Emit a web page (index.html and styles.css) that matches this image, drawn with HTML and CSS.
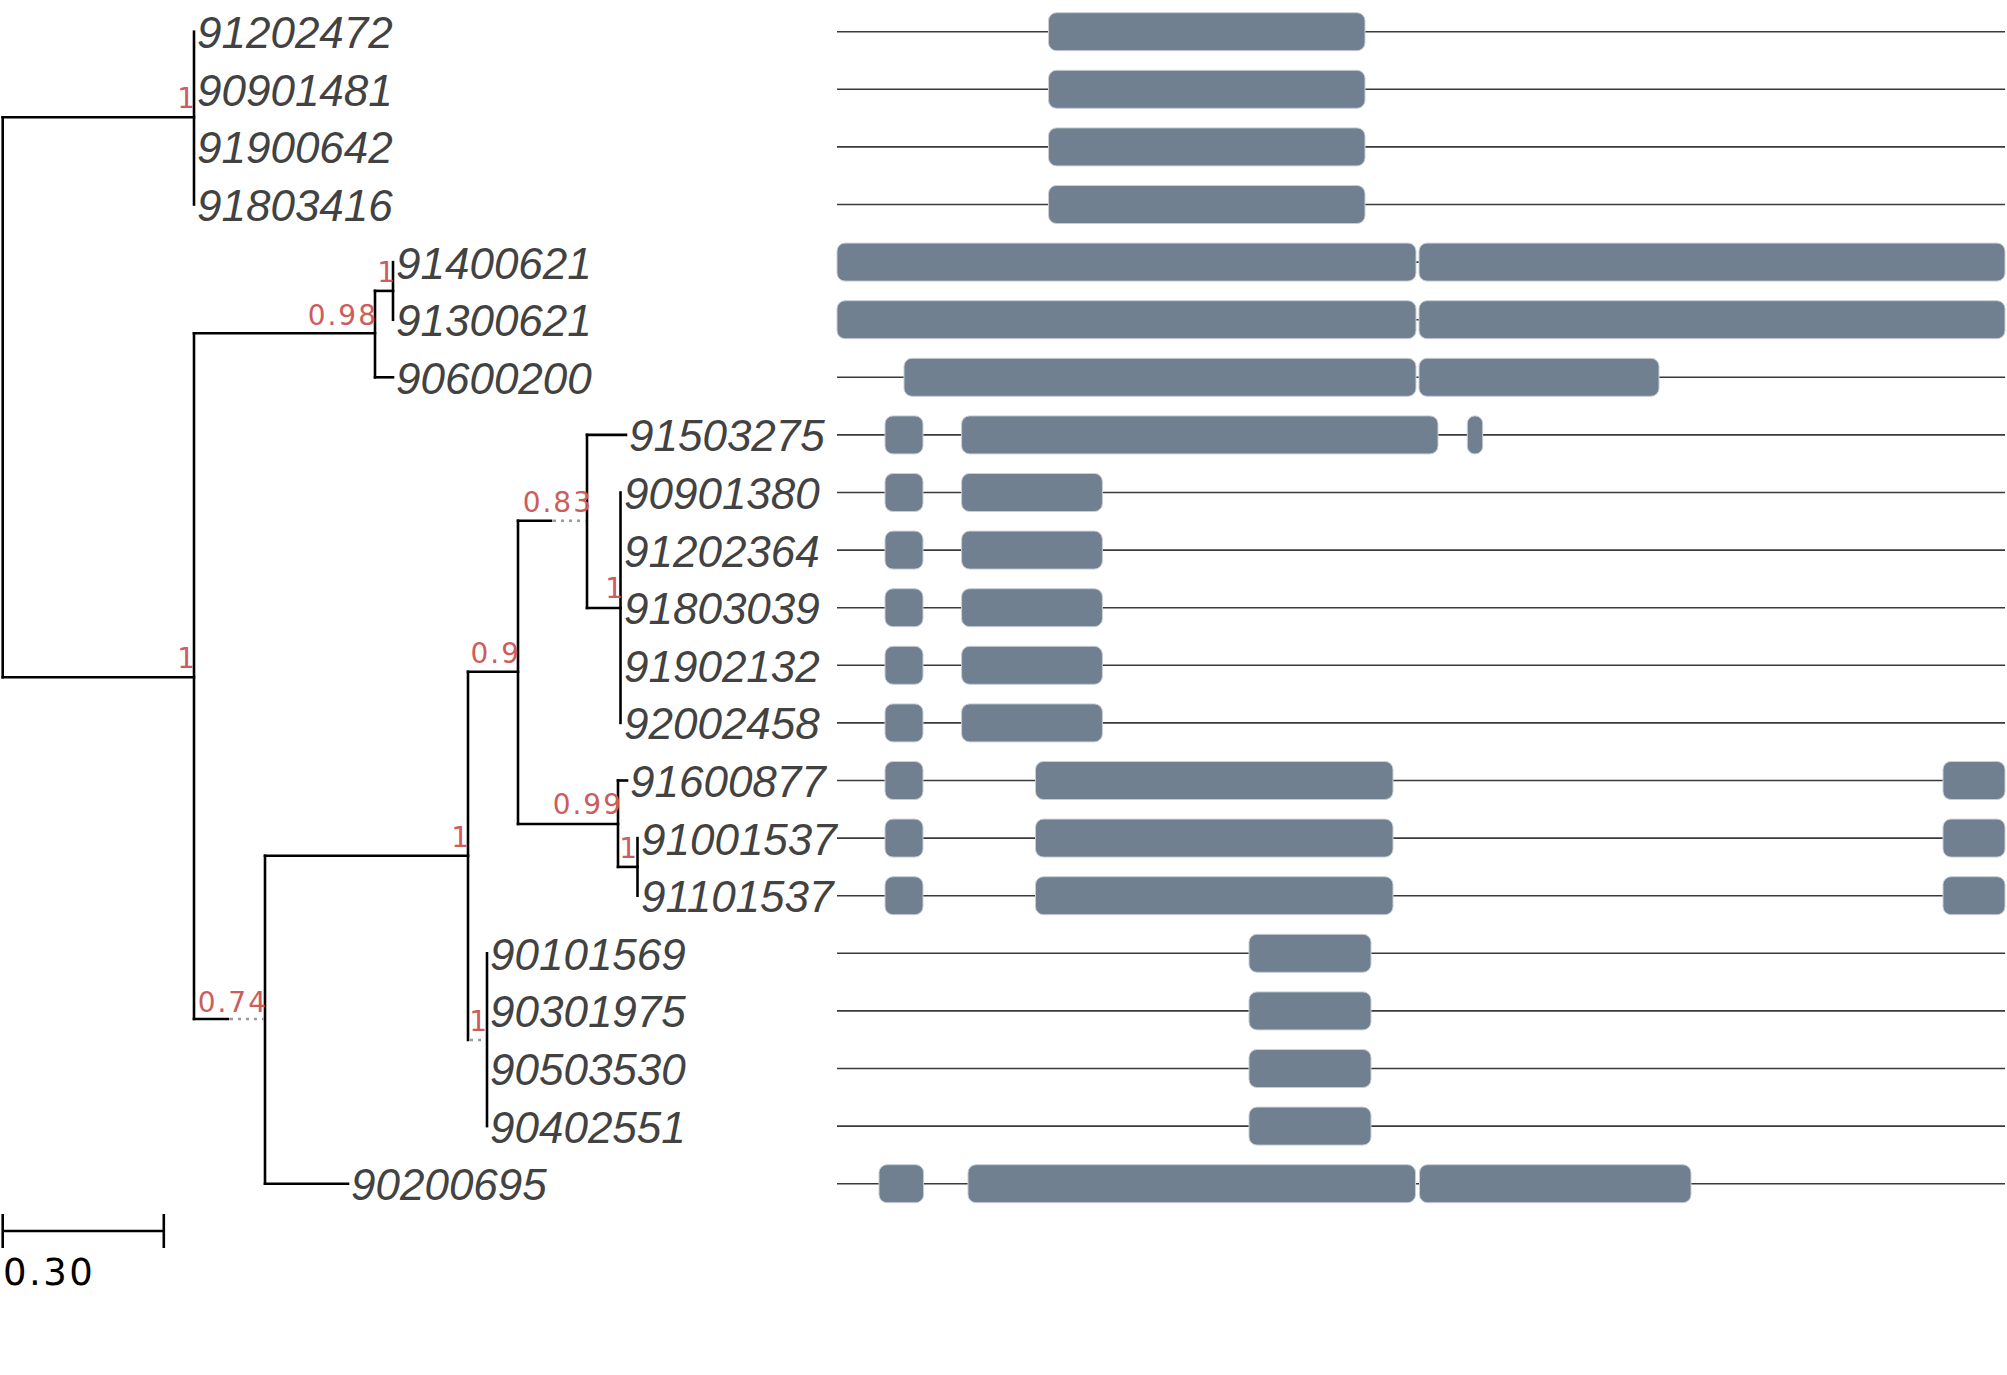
FILE: index.html
```html
<!DOCTYPE html>
<html lang="en">
<head>
<meta charset="utf-8">
<title>Tree with gene structure</title>
<link rel="stylesheet" href="styles.css">
</head>
<body>
<main class="figure">
<svg class="plot" width="2007" height="1375" viewBox="0 0 2007 1375" xmlns="http://www.w3.org/2000/svg">
  <!-- gene structure panel -->
  <g class="genes">
    <g class="introns">
      <line x1="837" x2="2005" y1="31.7" y2="31.7"/>
      <line x1="837" x2="2005" y1="89.3" y2="89.3"/>
      <line x1="837" x2="2005" y1="146.9" y2="146.9"/>
      <line x1="837" x2="2005" y1="204.5" y2="204.5"/>
      <line x1="837" x2="2005" y1="262.1" y2="262.1"/>
      <line x1="837" x2="2005" y1="319.7" y2="319.7"/>
      <line x1="837" x2="2005" y1="377.3" y2="377.3"/>
      <line x1="837" x2="2005" y1="434.9" y2="434.9"/>
      <line x1="837" x2="2005" y1="492.5" y2="492.5"/>
      <line x1="837" x2="2005" y1="550.1" y2="550.1"/>
      <line x1="837" x2="2005" y1="607.7" y2="607.7"/>
      <line x1="837" x2="2005" y1="665.3" y2="665.3"/>
      <line x1="837" x2="2005" y1="722.9" y2="722.9"/>
      <line x1="837" x2="2005" y1="780.5" y2="780.5"/>
      <line x1="837" x2="2005" y1="838.1" y2="838.1"/>
      <line x1="837" x2="2005" y1="895.7" y2="895.7"/>
      <line x1="837" x2="2005" y1="953.3" y2="953.3"/>
      <line x1="837" x2="2005" y1="1010.9" y2="1010.9"/>
      <line x1="837" x2="2005" y1="1068.5" y2="1068.5"/>
      <line x1="837" x2="2005" y1="1126.1" y2="1126.1"/>
      <line x1="837" x2="2005" y1="1183.7" y2="1183.7"/>
    </g>
    <g class="exons">
      <!-- rows 0-3 -->
      <rect x="1048.5" y="12.7" width="316.5" height="38" rx="8"/>
      <rect x="1048.5" y="70.3" width="316.5" height="38" rx="8"/>
      <rect x="1048.5" y="127.9" width="316.5" height="38" rx="8"/>
      <rect x="1048.5" y="185.5" width="316.5" height="38" rx="8"/>
      <!-- rows 4-5 -->
      <rect x="837" y="243.1" width="579" height="38" rx="8"/>
      <rect x="1419" y="243.1" width="586" height="38" rx="8"/>
      <rect x="837" y="300.7" width="579" height="38" rx="8"/>
      <rect x="1419" y="300.7" width="586" height="38" rx="8"/>
      <!-- row 6 -->
      <rect x="904" y="358.3" width="512" height="38" rx="8"/>
      <rect x="1419" y="358.3" width="240" height="38" rx="8"/>
      <!-- row 7 -->
      <rect x="885" y="415.9" width="38" height="38" rx="8"/>
      <rect x="961.6" y="415.9" width="476.4" height="38" rx="8"/>
      <rect x="1467.3" y="415.9" width="15.4" height="38" rx="7.5"/>
      <!-- rows 8-12 -->
      <rect x="885" y="473.5" width="38" height="38" rx="8"/>
      <rect x="961.6" y="473.5" width="140.8" height="38" rx="8"/>
      <rect x="885" y="531.1" width="38" height="38" rx="8"/>
      <rect x="961.6" y="531.1" width="140.8" height="38" rx="8"/>
      <rect x="885" y="588.7" width="38" height="38" rx="8"/>
      <rect x="961.6" y="588.7" width="140.8" height="38" rx="8"/>
      <rect x="885" y="646.3" width="38" height="38" rx="8"/>
      <rect x="961.6" y="646.3" width="140.8" height="38" rx="8"/>
      <rect x="885" y="703.9" width="38" height="38" rx="8"/>
      <rect x="961.6" y="703.9" width="140.8" height="38" rx="8"/>
      <!-- rows 13-15 -->
      <rect x="885" y="761.5" width="38" height="38" rx="8"/>
      <rect x="1035.5" y="761.5" width="357.5" height="38" rx="8"/>
      <rect x="1943" y="761.5" width="62" height="38" rx="8"/>
      <rect x="885" y="819.1" width="38" height="38" rx="8"/>
      <rect x="1035.5" y="819.1" width="357.5" height="38" rx="8"/>
      <rect x="1943" y="819.1" width="62" height="38" rx="8"/>
      <rect x="885" y="876.7" width="38" height="38" rx="8"/>
      <rect x="1035.5" y="876.7" width="357.5" height="38" rx="8"/>
      <rect x="1943" y="876.7" width="62" height="38" rx="8"/>
      <!-- rows 16-19 -->
      <rect x="1249" y="934.3" width="122" height="38" rx="8"/>
      <rect x="1249" y="991.9" width="122" height="38" rx="8"/>
      <rect x="1249" y="1049.5" width="122" height="38" rx="8"/>
      <rect x="1249" y="1107.1" width="122" height="38" rx="8"/>
      <!-- row 20 -->
      <rect x="879" y="1164.7" width="44.6" height="38" rx="8"/>
      <rect x="968" y="1164.7" width="447.5" height="38" rx="8"/>
      <rect x="1419.5" y="1164.7" width="271.5" height="38" rx="8"/>
    </g>
  </g>

  <!-- tree branches -->
  <g class="branches">
    <path d="M2.7 117.3 V677.3"/>
    <path d="M2.7 117.3 H194"/>
    <path d="M2.7 677.3 H194"/>
    <path d="M194 31.7 V204.5"/>
    <path d="M194 333.3 V1019"/>
    <path d="M194 333.3 H375"/>
    <path d="M375 290.9 V377.3"/>
    <path d="M375 290.9 H393"/>
    <path d="M393 262.1 V319.7"/>
    <path d="M375 377.3 H393"/>
    <path d="M194 1019 H228"/>
    <path d="M265 855.7 V1183.7"/>
    <path d="M265 1183.7 H348"/>
    <path d="M265 855.7 H468"/>
    <path d="M468 671.7 V1040"/>
    <path d="M468 671.7 H518"/>
    <path d="M518 520.7 V824"/>
    <path d="M518 520.7 H551"/>
    <path d="M587 434.9 V608"/>
    <path d="M587 434.9 H626"/>
    <path d="M587 608 H620.5"/>
    <path d="M620.5 492.5 V722.9"/>
    <path d="M518 824 H618"/>
    <path d="M618 780.5 V866.9"/>
    <path d="M618 780.5 H627"/>
    <path d="M618 866.9 H637.5"/>
    <path d="M637.5 838.1 V895.7"/>
    <path d="M487 953.3 V1126.1"/>
  </g>
  <g class="dotted">
    <path d="M230 1019 H264"/>
    <path d="M553 520.7 H586"/>
    <path d="M470 1040 H486"/>
  </g>

  <!-- support values -->
  <g class="support">
    <text x="197" y="108">1</text>
    <text x="378" y="325">0.98</text>
    <text x="397" y="282">1</text>
    <text x="197" y="668">1</text>
    <text x="268" y="1011.5">0.74</text>
    <text x="471" y="847">1</text>
    <text x="521" y="663">0.9</text>
    <text x="593" y="511.7">0.83</text>
    <text x="625" y="598">1</text>
    <text x="623" y="814">0.99</text>
    <text x="639" y="858">1</text>
    <text x="489" y="1030.7">1</text>
  </g>

  <!-- taxon labels -->
  <g class="taxa">
    <text x="197" y="48.2">91202472</text>
    <text x="197" y="105.8">90901481</text>
    <text x="197" y="163.4">91900642</text>
    <text x="197" y="221">91803416</text>
    <text x="396" y="278.6">91400621</text>
    <text x="396" y="336.2">91300621</text>
    <text x="396" y="393.8">90600200</text>
    <text x="629" y="451.4">91503275</text>
    <text x="624" y="509">90901380</text>
    <text x="624" y="566.6">91202364</text>
    <text x="624" y="624.2">91803039</text>
    <text x="624" y="681.8">91902132</text>
    <text x="624" y="739.4">92002458</text>
    <text x="630" y="797">91600877</text>
    <text x="641" y="854.6">91001537</text>
    <text x="641" y="912.2">91101537</text>
    <text x="490" y="969.8">90101569</text>
    <text x="490" y="1027.4">90301975</text>
    <text x="490" y="1085">90503530</text>
    <text x="490" y="1142.6">90402551</text>
    <text x="351" y="1200.2">90200695</text>
  </g>

  <!-- scale bar -->
  <g class="scale">
    <path class="scale-line" d="M2.7 1231 H163.8 M2.7 1214 V1248 M163.8 1214 V1248"/>
    <text class="scale-label" x="3" y="1285">0.30</text>
  </g>
</svg>
</main>
</body>
</html>
```

FILE: styles.css
```css
html, body {
  margin: 0;
  padding: 0;
  background: #ffffff;
}

.figure {
  display: block;
  width: 2007px;
  height: 1375px;
  overflow: hidden;
}

.plot {
  display: block;
}

.introns line {
  stroke: #3a3a3a;
  stroke-width: 1.6;
}

.exons rect {
  fill: #708090;
  stroke: #c9ced4;
  stroke-width: 1;
}

.branches path {
  fill: none;
  stroke: #000000;
  stroke-width: 2.6;
  stroke-linecap: square;
}

.dotted path {
  fill: none;
  stroke: #9a9a9a;
  stroke-width: 2.4;
  stroke-dasharray: 3 5;
}

.support text {
  font-family: "DejaVu Sans", sans-serif;
  font-size: 28px;
  letter-spacing: 2px;
  fill: #cd5c5c;
  text-anchor: end;
}

.taxa text {
  font-family: "Liberation Sans", Arial, sans-serif;
  font-style: italic;
  font-size: 44px;
  fill: #424242;
}

.scale-line {
  fill: none;
  stroke: #000000;
  stroke-width: 2.6;
}

.scale-label {
  font-family: "DejaVu Sans", sans-serif;
  font-size: 37px;
  letter-spacing: 2.5px;
  fill: #000000;
}
```
